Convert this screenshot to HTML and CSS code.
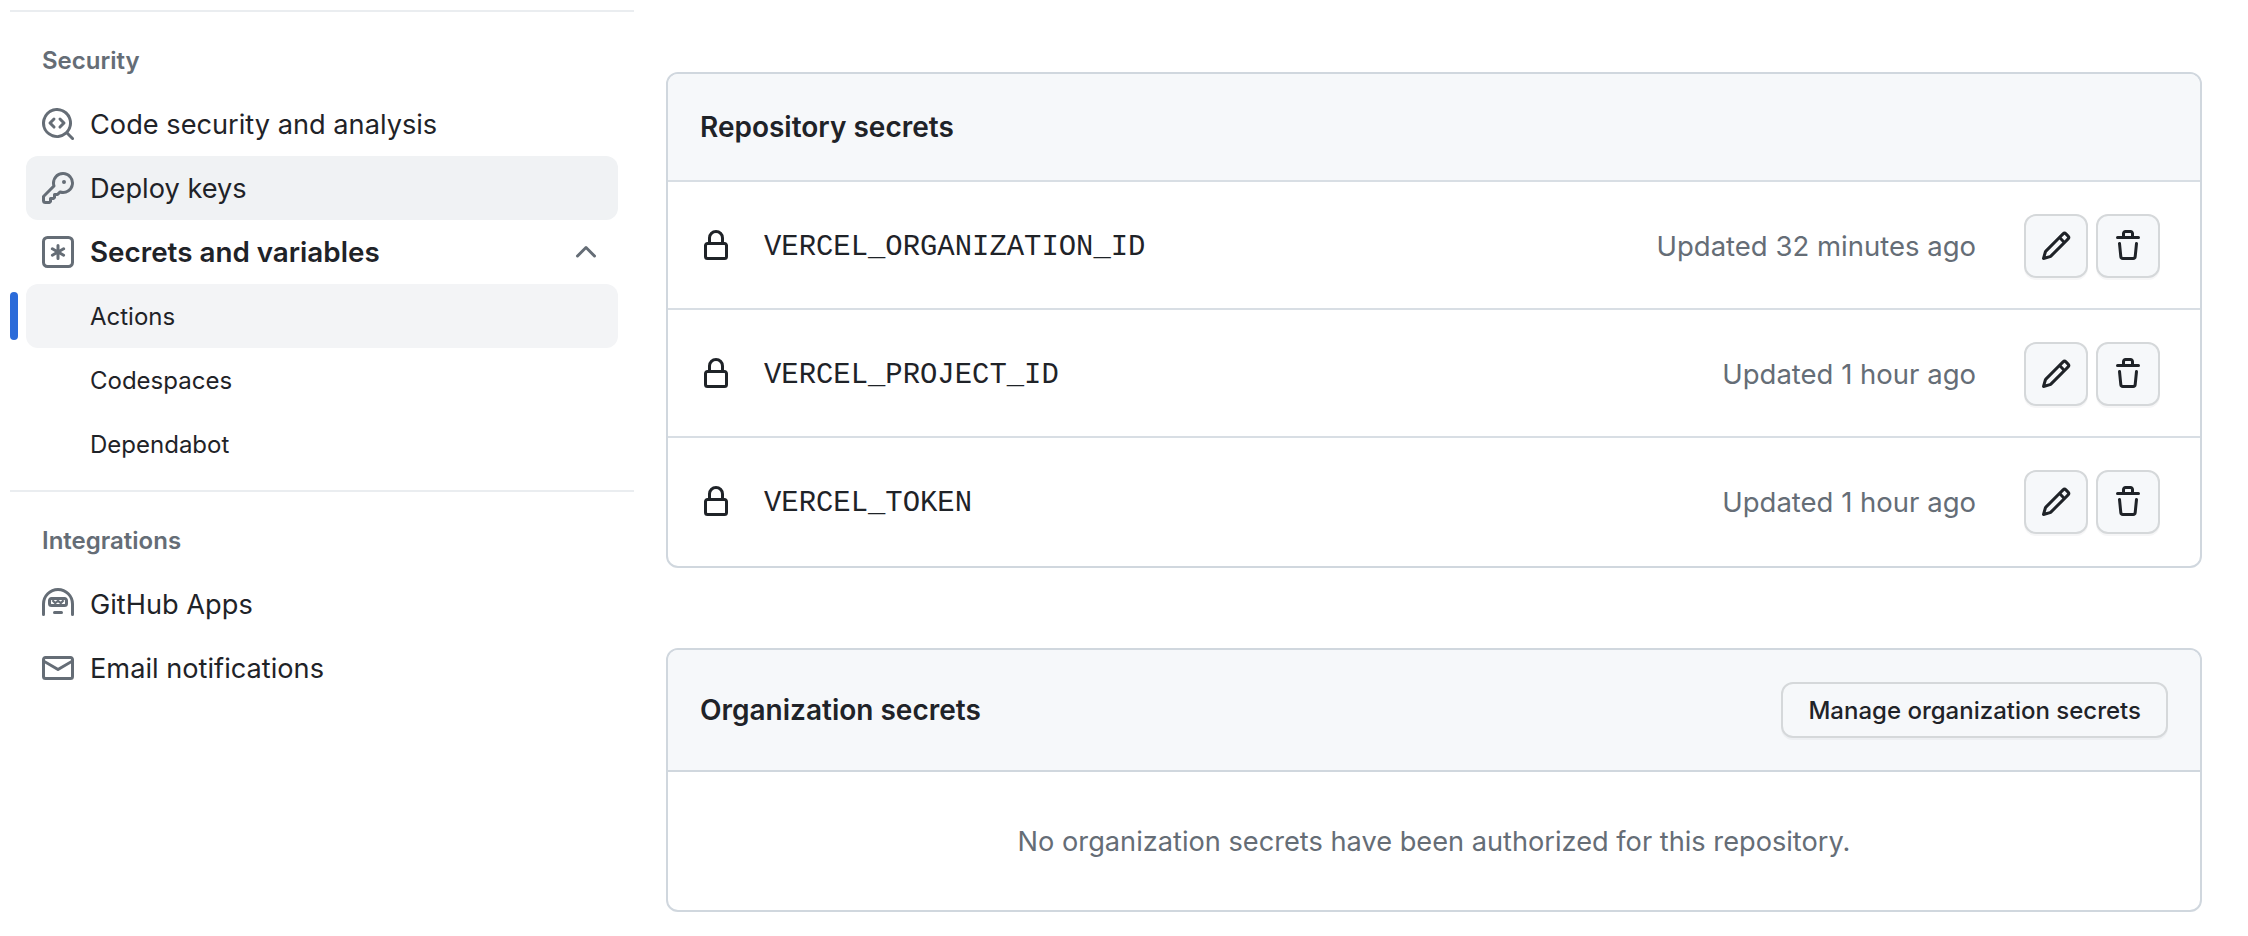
FILE: index.html
```html
<!DOCTYPE html>
<html lang="en">
<head>
  <meta charset="UTF-8" />
  <title>Actions secrets</title>
  <link rel="stylesheet" href="styles.css">
</head>
<body>
  <div class="page">
    <nav class="sidebar">
      <div class="divider"></div>
      <h2 class="nav-heading">Security</h2>
      <a class="nav-item">
        <svg class="icon" viewBox="0 0 16 16"><path d="M8.47 4.97a.75.75 0 0 0 0 1.06L9.94 7.5 8.47 8.97a.75.75 0 1 0 1.06 1.06l2-2a.75.75 0 0 0 0-1.06l-2-2a.75.75 0 0 0-1.06 0ZM6.53 6.03a.75.75 0 0 0-1.06-1.06l-2 2a.75.75 0 0 0 0 1.06l2 2a.75.75 0 1 0 1.06-1.06L5.06 7.5l1.47-1.47Z"/><path d="M12.246 13.307a7.501 7.501 0 1 1 1.06-1.06l2.474 2.473a.749.749 0 0 1-.326 1.275.749.749 0 0 1-.734-.215ZM1.5 7.5a6.002 6.002 0 0 0 3.608 5.504 6.002 6.002 0 0 0 6.486-1.117.748.748 0 0 1 .292-.293A6 6 0 1 0 1.5 7.5Z"/></svg>
        Code security and analysis
      </a>
      <a class="nav-item hovered">
        <svg class="icon" viewBox="0 0 16 16"><path d="M10.5 0a5.499 5.499 0 1 1-1.288 10.848l-.932.932a.749.749 0 0 1-.53.22H7v.75a.749.749 0 0 1-.22.53l-.5.5a.749.749 0 0 1-.53.22H5v.75a.749.749 0 0 1-.22.53l-.5.5a.749.749 0 0 1-.53.22h-2A1.75 1.75 0 0 1 0 14.25v-2c0-.199.079-.389.22-.53l4.932-4.932A5.5 5.5 0 0 1 10.5 0Zm-4 5.5c-.001.431.069.86.205 1.269a.75.75 0 0 1-.181.768L1.5 12.56v1.69c0 .138.112.25.25.25h1.69l.06-.06v-1.19a.75.75 0 0 1 .75-.75h1.19l.06-.06v-1.19a.75.75 0 0 1 .75-.75h1.19l1.023-1.025a.75.75 0 0 1 .768-.18A4 4 0 1 0 6.5 5.5ZM11 6a1 1 0 1 1 0-2 1 1 0 0 1 0 2Z"/></svg>
        Deploy keys
      </a>
      <a class="nav-item open">
        <svg class="icon" viewBox="0 0 16 16"><path d="M0 2.75A2.75 2.75 0 0 1 2.75 0h10.5A2.75 2.75 0 0 1 16 2.75v10.5A2.75 2.75 0 0 1 13.25 16H2.75A2.75 2.75 0 0 1 0 13.25ZM2.75 1.5c-.69 0-1.25.56-1.25 1.25v10.5c0 .69.56 1.25 1.25 1.25h10.5c.69 0 1.25-.56 1.25-1.25V2.75c0-.69-.56-1.25-1.25-1.25Z"/><path d="M8 4a.75.75 0 0 1 .75.75V6.7l1.69-.975a.75.75 0 0 1 .75 1.3L9.5 8l1.69.976a.75.75 0 0 1-.75 1.298L8.75 9.3v1.951a.75.75 0 0 1-1.5 0V9.299l-1.69.976a.75.75 0 0 1-.75-1.298L6.5 8l-1.69-.975a.75.75 0 0 1 .75-1.3l1.69.976V4.75A.75.75 0 0 1 8 4Z"/></svg>
        Secrets and variables
        <svg class="icon chevron" viewBox="0 0 16 16"><path d="M3.22 10.53a.749.749 0 0 1 0-1.06l4.25-4.25a.749.749 0 0 1 1.06 0l4.25 4.25a.749.749 0 0 1-1.06 1.06L8 6.811 4.28 10.53a.749.749 0 0 1-1.06 0Z"/></svg>
      </a>
      <a class="nav-item sub current"><span class="current-bar"></span>Actions</a>
      <a class="nav-item sub">Codespaces</a>
      <a class="nav-item sub">Dependabot</a>
      <div class="divider lower"></div>
      <h2 class="nav-heading">Integrations</h2>
      <a class="nav-item">
        <svg class="icon" viewBox="0 0 16 16"><path d="M0 8a8 8 0 0 1 16 0v5.25a.75.75 0 0 1-1.5 0V8a6.5 6.5 0 1 0-13 0v5.25a.75.75 0 0 1-1.5 0Z"/><path d="M4.75 4.5h6.5c.966 0 1.75.784 1.75 1.75v1.5A1.75 1.75 0 0 1 11.25 9.5h-6.5A1.75 1.75 0 0 1 3 7.75v-1.5C3 5.284 3.784 4.5 4.75 4.5ZM4.5 6.25v1.5c0 .138.112.25.25.25h6.5a.25.25 0 0 0 .25-.25v-1.5a.25.25 0 0 0-.25-.25h-6.5a.25.25 0 0 0-.25.25Z"/><path d="M5.2 6.1 6.6 7.5 8 6.4 9.4 7.5 10.8 6.1" fill="none" stroke="#656d76" stroke-width="1.1"/><path d="M6.25 11.5h3.5a.75.75 0 0 1 0 1.5h-3.5a.75.75 0 0 1 0-1.5Z"/></svg>
        GitHub Apps
      </a>
      <a class="nav-item">
        <svg class="icon" viewBox="0 0 16 16"><path d="M1.75 2h12.5c.966 0 1.75.784 1.75 1.75v8.5A1.75 1.75 0 0 1 14.25 14H1.75A1.75 1.75 0 0 1 0 12.25v-8.5C0 2.784.784 2 1.75 2ZM1.5 12.251c0 .138.112.25.25.25h12.5a.25.25 0 0 0 .25-.25V5.809L8.38 9.397a.75.75 0 0 1-.76 0L1.5 5.809v6.442Zm13-8.181v-.32a.25.25 0 0 0-.25-.25H1.75a.25.25 0 0 0-.25.25v.32L8 7.88Z"/></svg>
        Email notifications
      </a>
    </nav>

    <main class="content">
      <section class="box">
        <div class="box-header"><h3>Repository secrets</h3></div>
        <div class="secret-row">
          <svg class="icon lock" viewBox="0 0 16 16"><path d="M4 4a4 4 0 0 1 8 0v2h.25c.966 0 1.75.784 1.75 1.75v5.5A1.75 1.75 0 0 1 12.25 15h-8.5A1.75 1.75 0 0 1 2 13.25v-5.5C2 6.784 2.784 6 3.75 6H4Zm8.25 3.5h-8.5a.25.25 0 0 0-.25.25v5.5c0 .138.112.25.25.25h8.5a.25.25 0 0 0 .25-.25v-5.5a.25.25 0 0 0-.25-.25ZM10.5 6V4a2.5 2.5 0 1 0-5 0v2Z"/></svg>
          <span class="secret-name">VERCEL_ORGANIZATION_ID</span>
          <span class="updated">Updated 32 minutes ago</span>
          <button class="icon-btn"><svg class="icon" viewBox="0 0 16 16"><path d="M11.013 1.427a1.75 1.75 0 0 1 2.474 0l1.086 1.086a1.75 1.75 0 0 1 0 2.474l-8.61 8.61c-.21.21-.47.364-.756.445l-3.251.93a.75.75 0 0 1-.927-.928l.929-3.25c.081-.286.235-.547.445-.758l8.61-8.61Zm.176 4.823L9.75 4.81l-6.286 6.287a.253.253 0 0 0-.064.108l-.558 1.953 1.953-.558a.253.253 0 0 0 .108-.064Zm1.238-3.763a.25.25 0 0 0-.354 0L10.811 3.75l1.439 1.44 1.263-1.263a.25.25 0 0 0 0-.354Z"/></svg></button>
          <button class="icon-btn"><svg class="icon" viewBox="0 0 16 16"><path d="M11 1.75V3h2.25a.75.75 0 0 1 0 1.5H2.75a.75.75 0 0 1 0-1.5H5V1.75C5 .784 5.784 0 6.75 0h2.5C10.216 0 11 .784 11 1.75ZM4.496 6.675l.66 6.6a.25.25 0 0 0 .249.225h5.19a.25.25 0 0 0 .249-.225l.66-6.6a.75.75 0 0 1 1.492.149l-.66 6.6A1.748 1.748 0 0 1 10.595 15h-5.19a1.75 1.75 0 0 1-1.741-1.575l-.66-6.6a.75.75 0 1 1 1.492-.15ZM6.5 1.75V3h3V1.75a.25.25 0 0 0-.25-.25h-2.5a.25.25 0 0 0-.25.25Z"/></svg></button>
        </div>
        <div class="secret-row">
          <svg class="icon lock" viewBox="0 0 16 16"><path d="M4 4a4 4 0 0 1 8 0v2h.25c.966 0 1.75.784 1.75 1.75v5.5A1.75 1.75 0 0 1 12.25 15h-8.5A1.75 1.75 0 0 1 2 13.25v-5.5C2 6.784 2.784 6 3.75 6H4Zm8.25 3.5h-8.5a.25.25 0 0 0-.25.25v5.5c0 .138.112.25.25.25h8.5a.25.25 0 0 0 .25-.25v-5.5a.25.25 0 0 0-.25-.25ZM10.5 6V4a2.5 2.5 0 1 0-5 0v2Z"/></svg>
          <span class="secret-name">VERCEL_PROJECT_ID</span>
          <span class="updated">Updated 1 hour ago</span>
          <button class="icon-btn"><svg class="icon" viewBox="0 0 16 16"><path d="M11.013 1.427a1.75 1.75 0 0 1 2.474 0l1.086 1.086a1.75 1.75 0 0 1 0 2.474l-8.61 8.61c-.21.21-.47.364-.756.445l-3.251.93a.75.75 0 0 1-.927-.928l.929-3.25c.081-.286.235-.547.445-.758l8.61-8.61Zm.176 4.823L9.75 4.81l-6.286 6.287a.253.253 0 0 0-.064.108l-.558 1.953 1.953-.558a.253.253 0 0 0 .108-.064Zm1.238-3.763a.25.25 0 0 0-.354 0L10.811 3.75l1.439 1.44 1.263-1.263a.25.25 0 0 0 0-.354Z"/></svg></button>
          <button class="icon-btn"><svg class="icon" viewBox="0 0 16 16"><path d="M11 1.75V3h2.25a.75.75 0 0 1 0 1.5H2.75a.75.75 0 0 1 0-1.5H5V1.75C5 .784 5.784 0 6.75 0h2.5C10.216 0 11 .784 11 1.75ZM4.496 6.675l.66 6.6a.25.25 0 0 0 .249.225h5.19a.25.25 0 0 0 .249-.225l.66-6.6a.75.75 0 0 1 1.492.149l-.66 6.6A1.748 1.748 0 0 1 10.595 15h-5.19a1.75 1.75 0 0 1-1.741-1.575l-.66-6.6a.75.75 0 1 1 1.492-.15ZM6.5 1.75V3h3V1.75a.25.25 0 0 0-.25-.25h-2.5a.25.25 0 0 0-.25.25Z"/></svg></button>
        </div>
        <div class="secret-row">
          <svg class="icon lock" viewBox="0 0 16 16"><path d="M4 4a4 4 0 0 1 8 0v2h.25c.966 0 1.75.784 1.75 1.75v5.5A1.75 1.75 0 0 1 12.25 15h-8.5A1.75 1.75 0 0 1 2 13.25v-5.5C2 6.784 2.784 6 3.75 6H4Zm8.25 3.5h-8.5a.25.25 0 0 0-.25.25v5.5c0 .138.112.25.25.25h8.5a.25.25 0 0 0 .25-.25v-5.5a.25.25 0 0 0-.25-.25ZM10.5 6V4a2.5 2.5 0 1 0-5 0v2Z"/></svg>
          <span class="secret-name">VERCEL_TOKEN</span>
          <span class="updated">Updated 1 hour ago</span>
          <button class="icon-btn"><svg class="icon" viewBox="0 0 16 16"><path d="M11.013 1.427a1.75 1.75 0 0 1 2.474 0l1.086 1.086a1.75 1.75 0 0 1 0 2.474l-8.61 8.61c-.21.21-.47.364-.756.445l-3.251.93a.75.75 0 0 1-.927-.928l.929-3.25c.081-.286.235-.547.445-.758l8.61-8.61Zm.176 4.823L9.75 4.81l-6.286 6.287a.253.253 0 0 0-.064.108l-.558 1.953 1.953-.558a.253.253 0 0 0 .108-.064Zm1.238-3.763a.25.25 0 0 0-.354 0L10.811 3.75l1.439 1.44 1.263-1.263a.25.25 0 0 0 0-.354Z"/></svg></button>
          <button class="icon-btn"><svg class="icon" viewBox="0 0 16 16"><path d="M11 1.75V3h2.25a.75.75 0 0 1 0 1.5H2.75a.75.75 0 0 1 0-1.5H5V1.75C5 .784 5.784 0 6.75 0h2.5C10.216 0 11 .784 11 1.75ZM4.496 6.675l.66 6.6a.25.25 0 0 0 .249.225h5.19a.25.25 0 0 0 .249-.225l.66-6.6a.75.75 0 0 1 1.492.149l-.66 6.6A1.748 1.748 0 0 1 10.595 15h-5.19a1.75 1.75 0 0 1-1.741-1.575l-.66-6.6a.75.75 0 1 1 1.492-.15ZM6.5 1.75V3h3V1.75a.25.25 0 0 0-.25-.25h-2.5a.25.25 0 0 0-.25.25Z"/></svg></button>
        </div>
      </section>

      <section class="box">
        <div class="box-header org">
          <h3>Organization secrets</h3>
          <button class="btn">Manage organization secrets</button>
        </div>
        <div class="blankslate">No organization secrets have been authorized for this repository.</div>
      </section>
    </main>
  </div>
</body>
</html>
```

FILE: styles.css
```css
* {
  box-sizing: border-box;
}

body {
  margin: 0;
  background: #fff;
  color: #1f2328;
  font-family: Inter, "Noto Sans", sans-serif;
  font-size: 27.2px;
}

.page {
  display: flex;
  align-items: flex-start;
  gap: 32px;
  padding-left: 10px;
}

.sidebar {
  width: 624px;
  flex-shrink: 0;
  padding-top: 10px;
}

.divider {
  height: 2px;
  background: #eaedf0;
}

.divider.lower {
  margin-top: 14px;
}

.nav-heading {
  margin: 0;
  padding: 33px 0 0 32px;
  height: 80px;
  font-size: 24px;
  line-height: 32px;
  font-weight: 600;
  color: #656d76;
}

.nav-item {
  position: relative;
  display: flex;
  align-items: center;
  gap: 16px;
  height: 64px;
  margin: 0 16px;
  padding: 0 16px;
  border-radius: 12px;
  color: #1f2328;
}

.nav-item.hovered {
  background: #f0f2f4;
}

.nav-item.open {
  font-size: 27.8px;
  font-weight: 600;
}

.nav-item.sub {
  padding-left: 64px;
  font-size: 24px;
}

.nav-item.current {
  background: #f3f4f6;
}

.current-bar {
  position: absolute;
  left: -16px;
  top: 8px;
  width: 8px;
  height: 48px;
  border-radius: 4px;
  background: #2b6bd9;
}

.icon {
  width: 32px;
  height: 32px;
  flex-shrink: 0;
  fill: #656d76;
}

.chevron {
  margin-left: auto;
}

.content {
  display: flex;
  flex-direction: column;
  gap: 80px;
  width: 1536px;
  padding-top: 72px;
}

.box {
  border: 2px solid #d0d7de;
  border-radius: 12px;
  overflow: hidden;
}

.box-header {
  display: flex;
  align-items: center;
  height: 106px;
  padding: 0 32px;
  background: #f6f8fa;
}

.box-header.org {
  justify-content: space-between;
  height: 120px;
}

.box-header h3 {
  margin: 0;
  font-size: 28px;
  font-weight: 600;
}

.secret-row {
  display: flex;
  align-items: center;
  height: 128px;
  padding: 2px 40px 0 32px;
  border-top: 2px solid #d8dee4;
}

.secret-row:last-child {
  height: 130px;
  padding-bottom: 2px;
}

.lock {
  fill: #1f2328;
}

.secret-name {
  margin-left: 32px;
  padding-top: 2px;
  font-family: "Liberation Mono", monospace;
  font-size: 28.9px;
}

.updated {
  margin-left: auto;
  margin-right: 40px;
  font-size: 27.5px;
  color: #656d76;
}

.icon-btn {
  display: flex;
  align-items: center;
  justify-content: center;
  width: 64px;
  height: 64px;
  margin-left: 8px;
  padding: 0;
  background: #f6f8fa;
  border: 2px solid #d5d8da;
  border-radius: 12px;
  box-shadow: 0 2px 0 rgba(31, 35, 40, 0.04);
}

.icon-btn .icon {
  fill: #1f2328;
}

.btn {
  height: 56px;
  padding: 0 25px;
  background: #f6f8fa;
  border: 2px solid #d5d8da;
  border-radius: 12px;
  box-shadow: 0 2px 0 rgba(31, 35, 40, 0.04);
  font-family: inherit;
  font-size: 24px;
  font-weight: 500;
  color: #1f2328;
}

.blankslate {
  display: flex;
  align-items: center;
  justify-content: center;
  height: 140px;
  border-top: 2px solid #d0d7de;
  color: #656d76;
}
```
